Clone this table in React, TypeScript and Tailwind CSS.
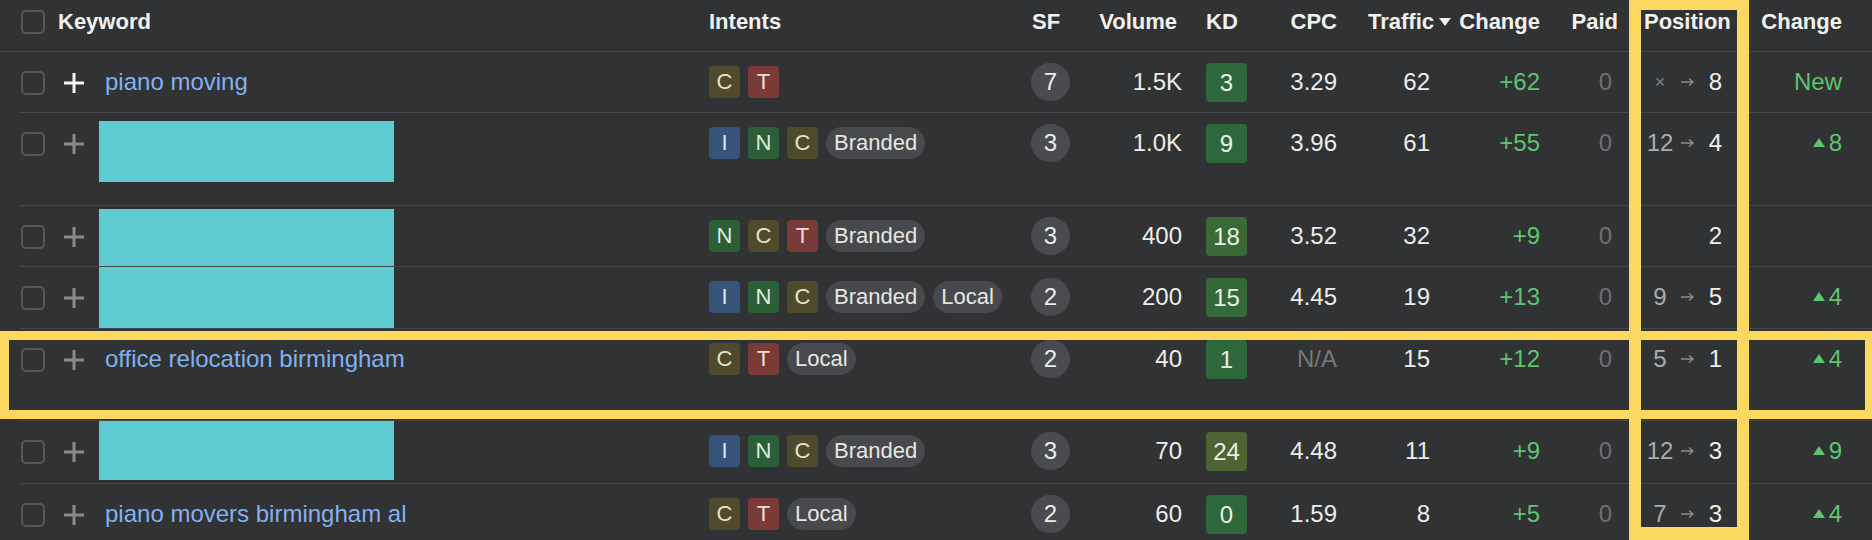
type Intent = "I" | "N" | "C" | "T";

type Row = {
  keyword?: string;
  redact?: string;
  hover?: boolean;
  h: string;
  intents: Intent[];
  tags: string[];
  sf: number;
  volume: string;
  kd: number;
  kdColor: string;
  cpc: string;
  traffic: number;
  change: string;
  from?: string;
  to: number;
  delta?: string;
};

const rows: Row[] = [
  { keyword: "piano moving", hover: true, h: "h-[61px]", intents: ["C", "T"], tags: [], sf: 7, volume: "1.5K", kd: 3, kdColor: "bg-[#2e673c]", cpc: "3.29", traffic: 62, change: "+62", from: "×", to: 8, delta: "New" },
  { redact: "mt-[8px] h-[61px]", h: "h-[93px]", intents: ["I", "N", "C"], tags: ["Branded"], sf: 3, volume: "1.0K", kd: 9, kdColor: "bg-[#2e673c]", cpc: "3.96", traffic: 61, change: "+55", from: "12", to: 4, delta: "8" },
  { redact: "mt-[3px] self-stretch", h: "h-[61px]", intents: ["N", "C", "T"], tags: ["Branded"], sf: 3, volume: "400", kd: 18, kdColor: "bg-[#3a6a36]", cpc: "3.52", traffic: 32, change: "+9", to: 2 },
  { redact: "self-stretch", h: "h-[62px]", intents: ["I", "N", "C"], tags: ["Branded", "Local"], sf: 2, volume: "200", kd: 15, kdColor: "bg-[#36693a]", cpc: "4.45", traffic: 19, change: "+13", from: "9", to: 5, delta: "4" },
  { keyword: "office relocation birmingham", h: "h-[92px]", intents: ["C", "T"], tags: ["Local"], sf: 2, volume: "40", kd: 1, kdColor: "bg-[#2e673c]", cpc: "N/A", traffic: 15, change: "+12", from: "5", to: 1, delta: "4" },
  { redact: "h-[59px]", h: "h-[63px]", intents: ["I", "N", "C"], tags: ["Branded"], sf: 3, volume: "70", kd: 24, kdColor: "bg-[#4d6331]", cpc: "4.48", traffic: 11, change: "+9", from: "12", to: 3, delta: "9" },
  { keyword: "piano movers birmingham al", h: "h-[61px]", intents: ["C", "T"], tags: ["Local"], sf: 2, volume: "60", kd: 0, kdColor: "bg-[#2e673c]", cpc: "1.59", traffic: 8, change: "+5", from: "7", to: 3, delta: "4" },
];

const intentStyle: Record<Intent, string> = {
  I: "bg-[#37537a] text-[#dde8f7]",
  N: "bg-[#2c5e38] text-[#dcefdc]",
  C: "bg-[#504a2c] text-[#e6e1c8]",
  T: "bg-[#7a3a38] text-[#f4dcdc]",
};

const cols =
  "grid grid-cols-[38px_651px_321px_60px_93px_77px_77px_115px_88px_78px_135px_89px]";

function Checkbox() {
  return <div className="w-[24px] h-[24px] rounded-[5px] border-2 border-[#565759]" />;
}

function Plus({ light }: { light?: boolean }) {
  return (
    <svg width="22" height="22" viewBox="0 0 22 22">
      <path
        d="M11 1v20M1 11h20"
        stroke={light ? "#f4f4f4" : "#8a8b8d"}
        strokeWidth="3"
        fill="none"
      />
    </svg>
  );
}

function Arrow() {
  return (
    <svg width="14" height="10" viewBox="0 0 14 10" className="mt-[11px]">
      <path d="M0 5h12M8 1.5L12 5L8 8.5" stroke="#8c8d90" strokeWidth="1.4" fill="none" />
    </svg>
  );
}

function Up() {
  return (
    <svg width="12" height="9" viewBox="0 0 12 9">
      <polygon points="6,0 12,9 0,9" fill="#5cc56e" />
    </svg>
  );
}

export default function App() {
  return (
    <div className="relative w-[1872px] h-[540px] overflow-hidden bg-[#313234] font-['Liberation_Sans',Arial,sans-serif] text-[#ececec]">
      {/* header */}
      <div className="h-[52px] border-b border-[#45464a] pl-[20px]">
        <div className={`${cols} text-[22px] leading-[28px] font-bold text-[#f2f2f2]`}>
          <div className="pt-[10px] pl-[1px]">
            <Checkbox />
          </div>
          <div className="pt-[8px]">Keyword</div>
          <div className="pt-[8px]">Intents</div>
          <div className="pt-[8px] pl-[2px]">SF</div>
          <div className="pt-[8px] text-right pr-[6px]">Volume</div>
          <div className="pt-[8px] pl-[23px]">KD</div>
          <div className="pt-[8px] text-right">CPC</div>
          <div className="pt-[8px] flex justify-end items-center pr-[1px] h-[36px]">
            <span>Traffic</span>
            <svg width="12" height="8" viewBox="0 0 12 8" className="ml-[5px]">
              <polygon points="0,0 12,0 6,8" fill="#f2f2f2" />
            </svg>
          </div>
          <div className="pt-[8px] text-right">Change</div>
          <div className="pt-[8px] text-right">Paid</div>
          <div className="pt-[8px] pl-[26px]">Position</div>
          <div className="pt-[8px] text-right">Change</div>
        </div>
      </div>

      {/* rows */}
      <div className="pl-[20px]">
        {rows.map((r, i) => (
          <div key={i} className={`${cols} ${r.h} border-b border-[#45464a] text-[24px] leading-[32px]`}>
            <div className="pt-[19px] pl-[1px]">
              <Checkbox />
            </div>
            <div className="flex items-start">
              <div className="ml-[5px] mt-[20px]">
                <Plus light={r.hover} />
              </div>
              {r.keyword ? (
                <span className="ml-[20px] mt-[14px] text-[#82b1ee]">{r.keyword}</span>
              ) : (
                <div className={`ml-[14px] w-[295px] bg-[#5ecbd3] ${r.redact}`} />
              )}
            </div>
            <div className="pt-[14px] flex gap-[8px]">
              {r.intents.map((k) => (
                <span
                  key={k}
                  className={`w-[31px] h-[32px] rounded-[4px] flex items-center justify-center text-[22px] ${intentStyle[k]}`}
                >
                  {k}
                </span>
              ))}
              {r.tags.map((t) => (
                <span key={t} className="h-[32px] px-[8px] rounded-full bg-[#48494c] text-[22px] text-[#e6e6e6] flex items-center">
                  {t}
                </span>
              ))}
            </div>
            <div className="pt-[11px] pl-[1px]">
              <div className="w-[39px] h-[38px] rounded-full bg-[#4a4b4e] flex items-center justify-center">
                {r.sf}
              </div>
            </div>
            <div className="pt-[14px] text-right pr-[1px]">{r.volume}</div>
            <div className="pt-[11px] pl-[23px]">
              <div className={`w-[41px] h-[39px] rounded-[4px] flex items-center justify-center text-[#e8f1e8] ${r.kdColor}`}>
                {r.kd}
              </div>
            </div>
            <div className={`pt-[14px] text-right ${r.cpc === "N/A" ? "text-[#76777a]" : ""}`}>{r.cpc}</div>
            <div className="pt-[14px] text-right pr-[22px]">{r.traffic}</div>
            <div className="pt-[14px] text-right text-[#5cc56e]">{r.change}</div>
            <div className="pt-[14px] text-right pr-[6px] text-[#6e6f72]">0</div>
            <div className="pt-[14px] pl-[26px] flex">
              <div className="w-[32px] h-[32px] flex items-center justify-center text-[#ababab]">
                {r.from === "×" ? <span className="text-[19px] text-[#7c7d80]">×</span> : r.from}
              </div>
              <div className="w-[16px] ml-[4px] flex justify-center">{r.from && <Arrow />}</div>
              <div className="ml-[8px] w-[18px] text-right text-[#f0f0f0]">{r.to}</div>
            </div>
            <div className="pt-[14px] flex justify-end items-start text-[#5cc56e]">
              {r.delta === "New" ? (
                <span>New</span>
              ) : r.delta ? (
                <>
                  <span className="mt-[11px] mr-[4px]">
                    <Up />
                  </span>
                  <span>{r.delta}</span>
                </>
              ) : null}
            </div>
          </div>
        ))}
      </div>

      {/* annotation boxes */}
      <div className="absolute left-[1629px] top-0 w-[120px] h-[540px] border-x-[12px] border-t-[10px] border-b-[13px] border-[#fbd860] pointer-events-none" />
      <div className="absolute left-0 top-[331px] w-[1874px] h-[88px] border-[9px] border-[#fbd860] pointer-events-none" />
    </div>
  );
}
